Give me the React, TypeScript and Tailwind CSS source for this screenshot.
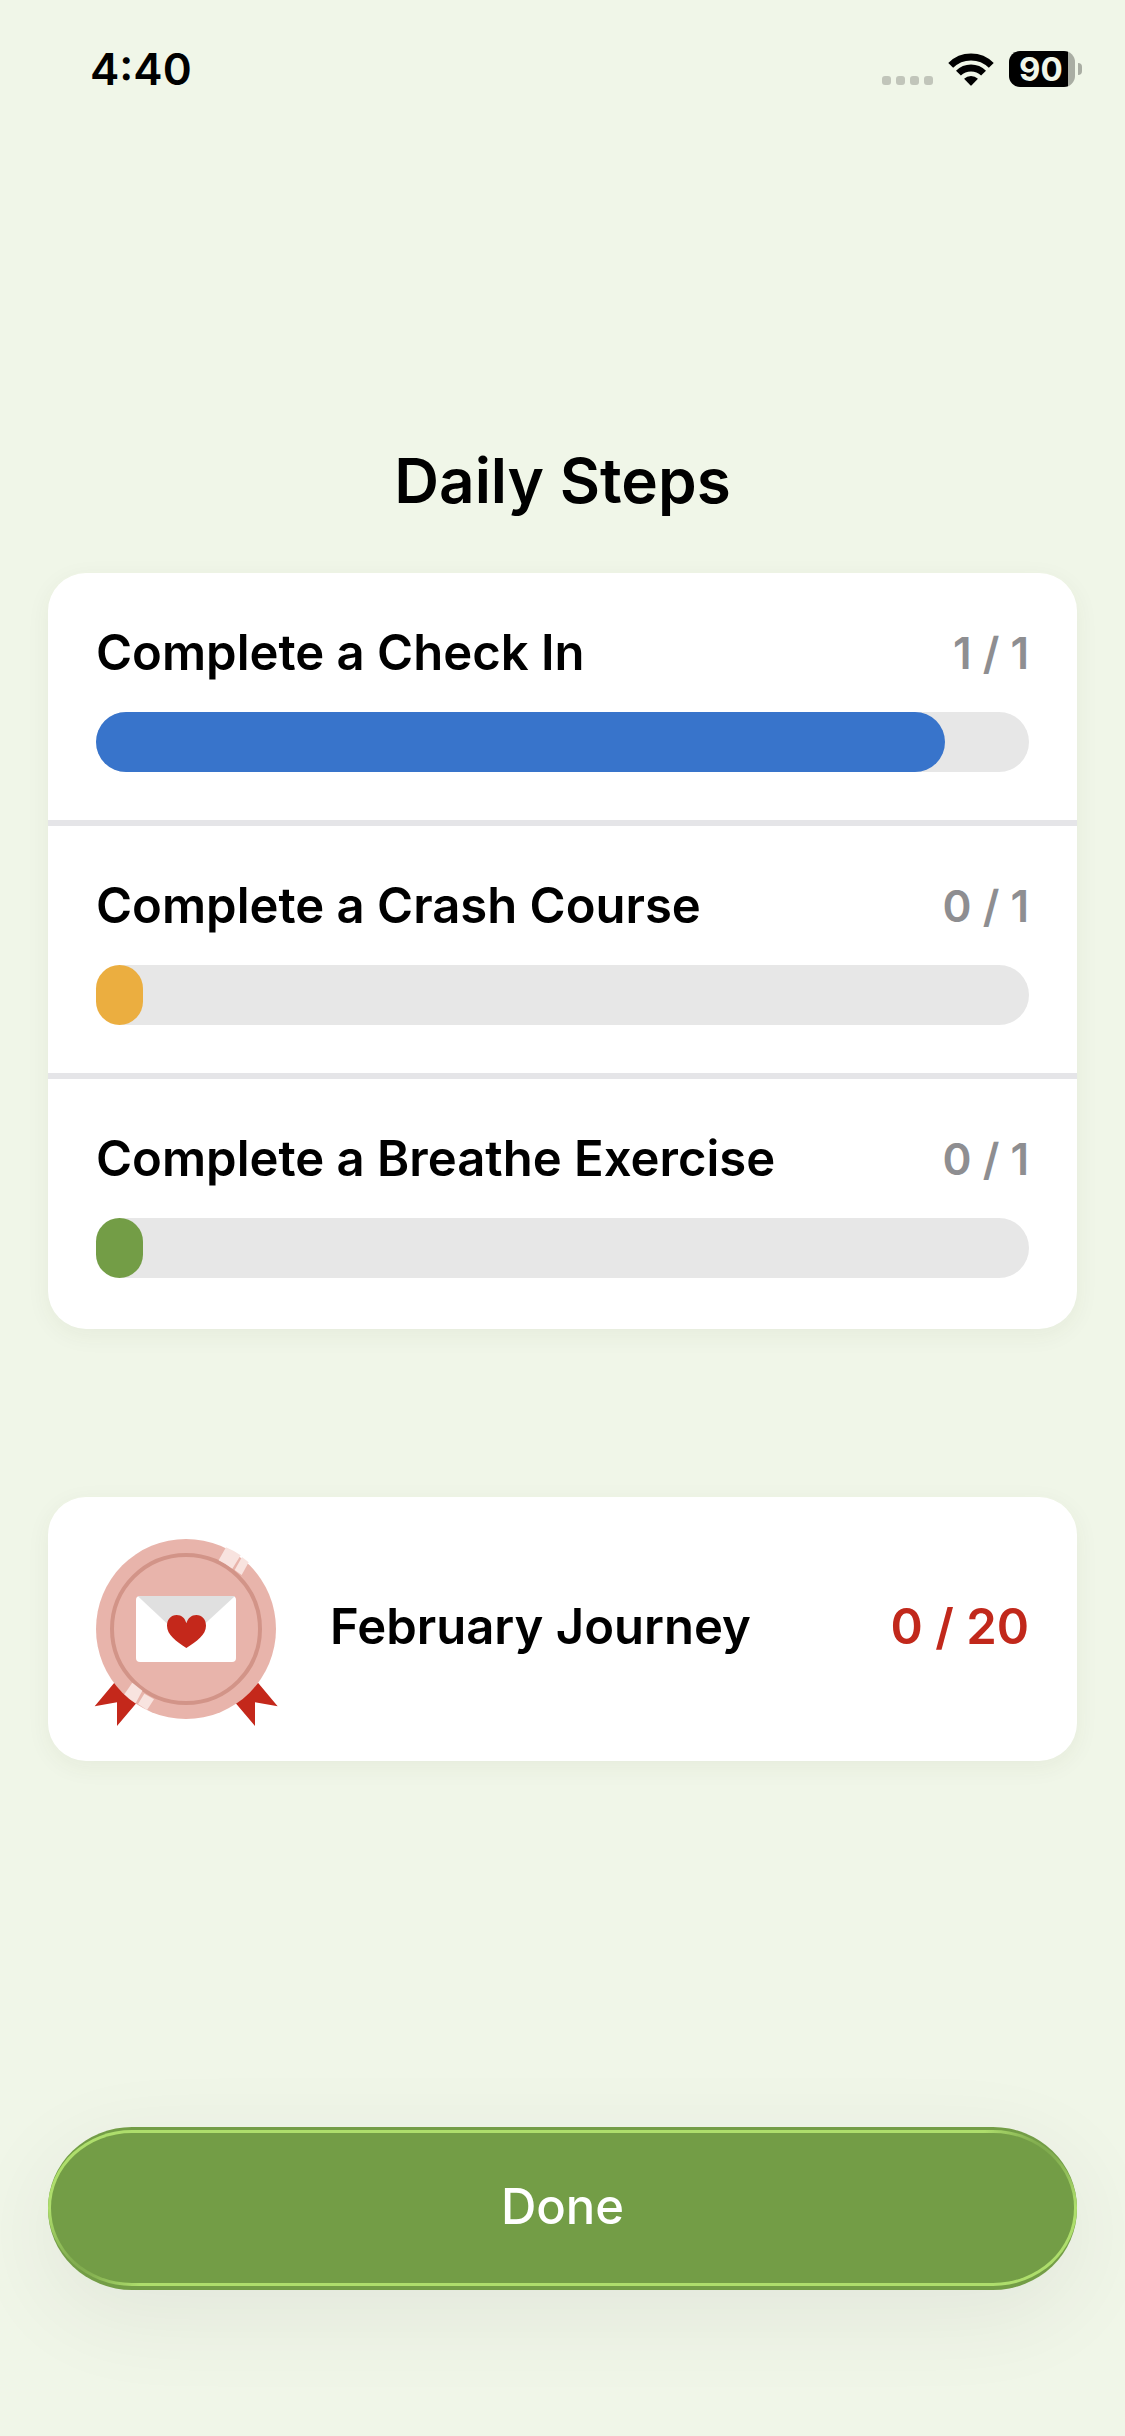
const steps = [
    { title: "Complete a Check In", count: "1 / 1", percent: 91, color: "bg-[#3874cb]" },
    { title: "Complete a Crash Course", count: "0 / 1", percent: 5, color: "bg-[#ebae40]" },
    { title: "Complete a Breathe Exercise", count: "0 / 1", percent: 5, color: "bg-[#739d46]" },
];

const WifiIcon = () => (
    <svg viewBox="264 65 138 100" className="w-[46px] h-[33px]" fill="none" stroke="#000" strokeWidth="21">
        <path d="M271.5 102.5A87 87 0 0 1 394.5 102.5" />
        <path d="M295 126A54 54 0 0 1 371 126" />
        <path d="M312 143A31 31 0 0 1 354 143L335 163Q333 165 331 163Z" fill="#000" stroke="none" />
    </svg>
);

const StatusBar = () => (
    <header className="flex h-[138px] items-center justify-between pl-[90px] pr-[43px]">
        <span className="text-[44px] leading-none font-semibold">4:40</span>
        <div className="flex items-center">
            {/* Không có sóng di động */}
            <div className="flex gap-[5px] pt-[22px]">
                <span className="size-[9px] rounded-[3px] bg-[#c1c5ba]" />
                <span className="size-[9px] rounded-[3px] bg-[#c1c5ba]" />
                <span className="size-[9px] rounded-[3px] bg-[#c1c5ba]" />
                <span className="size-[9px] rounded-[3px] bg-[#c1c5ba]" />
            </div>
            <div className="ml-[15px]">
                <WifiIcon />
            </div>
            {/* Pin */}
            <div className="ml-[15px] h-9 w-[66px] rounded-[11px] bg-[linear-gradient(to_right,#000_59px,#a9ada3_59px)] pl-[10px] text-[33px] leading-9 font-bold text-[#f0f6e8]">
                90
            </div>
            <span className="ml-[3px] h-3 w-1 rounded-r-full bg-[#a9ada3]" />
        </div>
    </header>
);

const Medal = () => (
    <svg viewBox="72 66 552 582" className="h-[194px] w-[184px] shrink-0" role="img" aria-label="February medal">
        {/* Ruy băng */}
        <path d="M133 518L74 589L141 577V648L200 578Z" fill="#c4281b" />
        <path d="M564 518L623 589L555 577V648L496 578Z" fill="#c4281b" />
        <circle cx="348" cy="357" r="270" fill="#e8b4ab" />
        <circle cx="348" cy="357" r="222" fill="none" stroke="#d29488" strokeWidth="12" />
        {/* Vệt sáng */}
        <g fill="#f8e3df">
            <path d="M468 112Q490 121 512 136L487 176Q468 162 446 151Z" />
            <path d="M516 141L536 157L515 195L494 180Z" />
            <path d="M187 518L217 542L197 580Q178 568 163 553Z" />
            <path d="M223 551L252 568L231 600L204 582Z" />
        </g>
        {/* Phong bì */}
        <rect x="198" y="258" width="300" height="198" rx="12" fill="#fff" />
        <path d="M203 258H495L365 378Q348 390 331 378Z" fill="#e0e0e0" />
        <path
            d="M349 340C345 324 335 315 320 315C303 315 291 328 291 347C291 375 319 393 349 414C380 393 408 375 408 347C408 328 396 315 379 315C364 315 354 324 349 340Z"
            fill="#c4281b"
        />
    </svg>
);

const App = () => {
    return (
        <div className="flex min-h-screen w-full flex-col bg-[#f0f6e8] font-['Inter',sans-serif] text-black">
            <StatusBar />

            <main className="flex flex-1 flex-col px-12">
                <h1 className="mt-[303px] text-center text-[62px] leading-[80px] font-semibold">Daily Steps</h1>

                <section className="mt-[52px] overflow-hidden rounded-[38px] bg-white pb-[3px] shadow-[0_6px_24px_rgba(60,70,30,0.06)]">
                    <ul className="divide-y-6 divide-[#e5e5e8]">
                        {steps.map((step, index) => (
                            <li key={step.title} className="px-12 pt-[50px] pb-12">
                                <div className="flex h-[60px] items-center justify-between">
                                    <h2 id={`step-${index}`} className="text-[49px] leading-[60px] font-semibold">
                                        {step.title}
                                    </h2>
                                    <span className="text-[44px] leading-[60px] font-semibold text-[#8e8e91]">{step.count}</span>
                                </div>
                                <div
                                    role="progressbar"
                                    aria-labelledby={`step-${index}`}
                                    aria-valuenow={step.percent}
                                    className="mt-[29px] h-[60px] rounded-full bg-[#e7e7e7]"
                                >
                                    <div className={`h-full rounded-full ${step.color}`} style={{ width: `${step.percent}%` }} />
                                </div>
                            </li>
                        ))}
                    </ul>
                </section>

                <section className="mt-[168px] flex h-[264px] items-center rounded-[38px] bg-white pr-12 pl-[46px] shadow-[0_6px_24px_rgba(60,70,30,0.06)]">
                    <Medal />
                    <h2 className="ml-[52px] flex-1 pb-1 text-[49px] leading-[60px] font-semibold">February Journey</h2>
                    <span className="pb-1 text-[49px] leading-[60px] font-semibold text-[#c1281b]">0 / 20</span>
                </section>

                <button
                    type="button"
                    className="relative mt-auto mb-[146px] h-[163px] w-full cursor-pointer rounded-[84px/81px] bg-[#739d46] pb-1 text-[49px] font-medium text-white shadow-[0_24px_90px_rgba(60,50,70,0.08)]"
                >
                    {/* Viền sáng */}
                    <span className="absolute inset-x-0 top-[3px] bottom-1 rounded-[84px/78px] bg-[radial-gradient(circle_at_40px_125px,#739d46_0,transparent_60px),radial-gradient(circle_at_calc(100%-40px)_30px,#739d46_0,transparent_60px),linear-gradient(#aede6c,#aede6c)] p-[3px]">
                        <span className="block h-full rounded-[81px/75px] bg-[#739d46]" />
                    </span>
                    <span className="relative">Done</span>
                </button>
            </main>
        </div>
    );
};

export default App;
